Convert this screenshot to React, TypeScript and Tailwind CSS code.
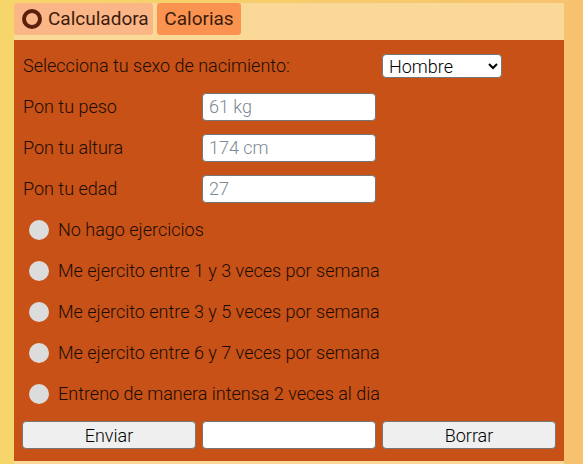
import { useState } from "react";

const opciones = [
  "No hago ejercicios",
  "Me ejercito entre 1 y 3 veces por semana",
  "Me ejercito entre 3 y 5 veces por semana",
  "Me ejercito entre 6 y 7 veces por semana",
  "Entreno de manera intensa 2 veces al dia",
];

export default function App() {
  const [tab, setTab] = useState("calc");

  return (
    <div className="min-h-[464px] w-full bg-gradient-to-r from-[#f6d66a] to-[#f7c26f] pt-[3px] pl-[14px] font-['Roboto',sans-serif]">
      <div className="w-[550px] bg-[#f9d898]">
        {/* Tabs */}
        <div className="flex h-[37px] items-start gap-[4px]">
          <button
            onClick={() => setTab("calc")}
            className="flex h-[32px] w-[139px] items-center gap-[6px] rounded-[3px] bg-[#fbb688] pl-[8px] text-[19px] text-[#3b1c0c]"
          >
            <span className="h-[20px] w-[20px] rounded-full border-[4px] border-[#5b200d]" />
            Calculadora
          </button>
          <button
            onClick={() => setTab("cal")}
            className="flex h-[32px] w-[84px] items-center justify-center rounded-[3px] bg-[#fb9350] text-[19px] text-[#3b1c0c]"
          >
            Calorias
          </button>
        </div>

        {/* Panel */}
        <div className="bg-[#c75116] px-[8px] pt-[5px] pb-[6px] text-[18px] font-light text-[#1a0c04]">
          <div className="grid grid-cols-[174px_174px_174px] gap-x-[6px]">
            <div className="col-span-2 flex h-[41px] items-center pl-[1px]">
              Selecciona tu sexo de nacimiento:
            </div>
            <div className="flex h-[41px] items-center">
              <select className="h-[24px] w-[120px] rounded-[4px] border border-[#767676] bg-white px-[2px] text-[18px] font-light text-black">
                <option>Hombre</option>
                <option>Mujer</option>
              </select>
            </div>

            {[
              ["Pon tu peso", "61 kg"],
              ["Pon tu altura", "174 cm"],
              ["Pon tu edad", "27"],
            ].map(([label, ph]) => (
              <div key={label} className="col-span-3 grid h-[41px] grid-cols-[174px_174px_174px] items-center gap-x-[6px]">
                <div className="pl-[1px]">{label}</div>
                <input
                  placeholder={ph}
                  className="h-[28px] rounded-[4px] border border-[#767676] bg-white px-[6px] text-[18px] font-light placeholder:text-[#7b8792] outline-none"
                />
              </div>
            ))}

            {opciones.map((o) => (
              <label key={o} className="col-span-3 flex h-[41px] cursor-pointer items-center gap-[9px] pl-[7px]">
                <input type="radio" name="ej" className="peer hidden" />
                <span className="h-[20px] w-[20px] rounded-full bg-[#dcdcdc] peer-checked:border-[5px] peer-checked:border-[#dcdcdc] peer-checked:bg-[#5b200d]" />
                {o}
              </label>
            ))}

            <div className="col-span-3 grid h-[41px] grid-cols-[174px_174px_174px] items-center gap-x-[6px]">
              <button className="h-[28px] rounded-[4px] border border-[#767676] bg-[#efefef] text-[18px] font-light text-black">
                Enviar
              </button>
              <div className="h-[28px] rounded-[4px] border border-[#767676] bg-white" />
              <button className="h-[28px] rounded-[4px] border border-[#767676] bg-[#efefef] text-[18px] font-light text-black">
                Borrar
              </button>
            </div>
          </div>
        </div>
        <div className="h-[3px]" />
      </div>
    </div>
  );
}
